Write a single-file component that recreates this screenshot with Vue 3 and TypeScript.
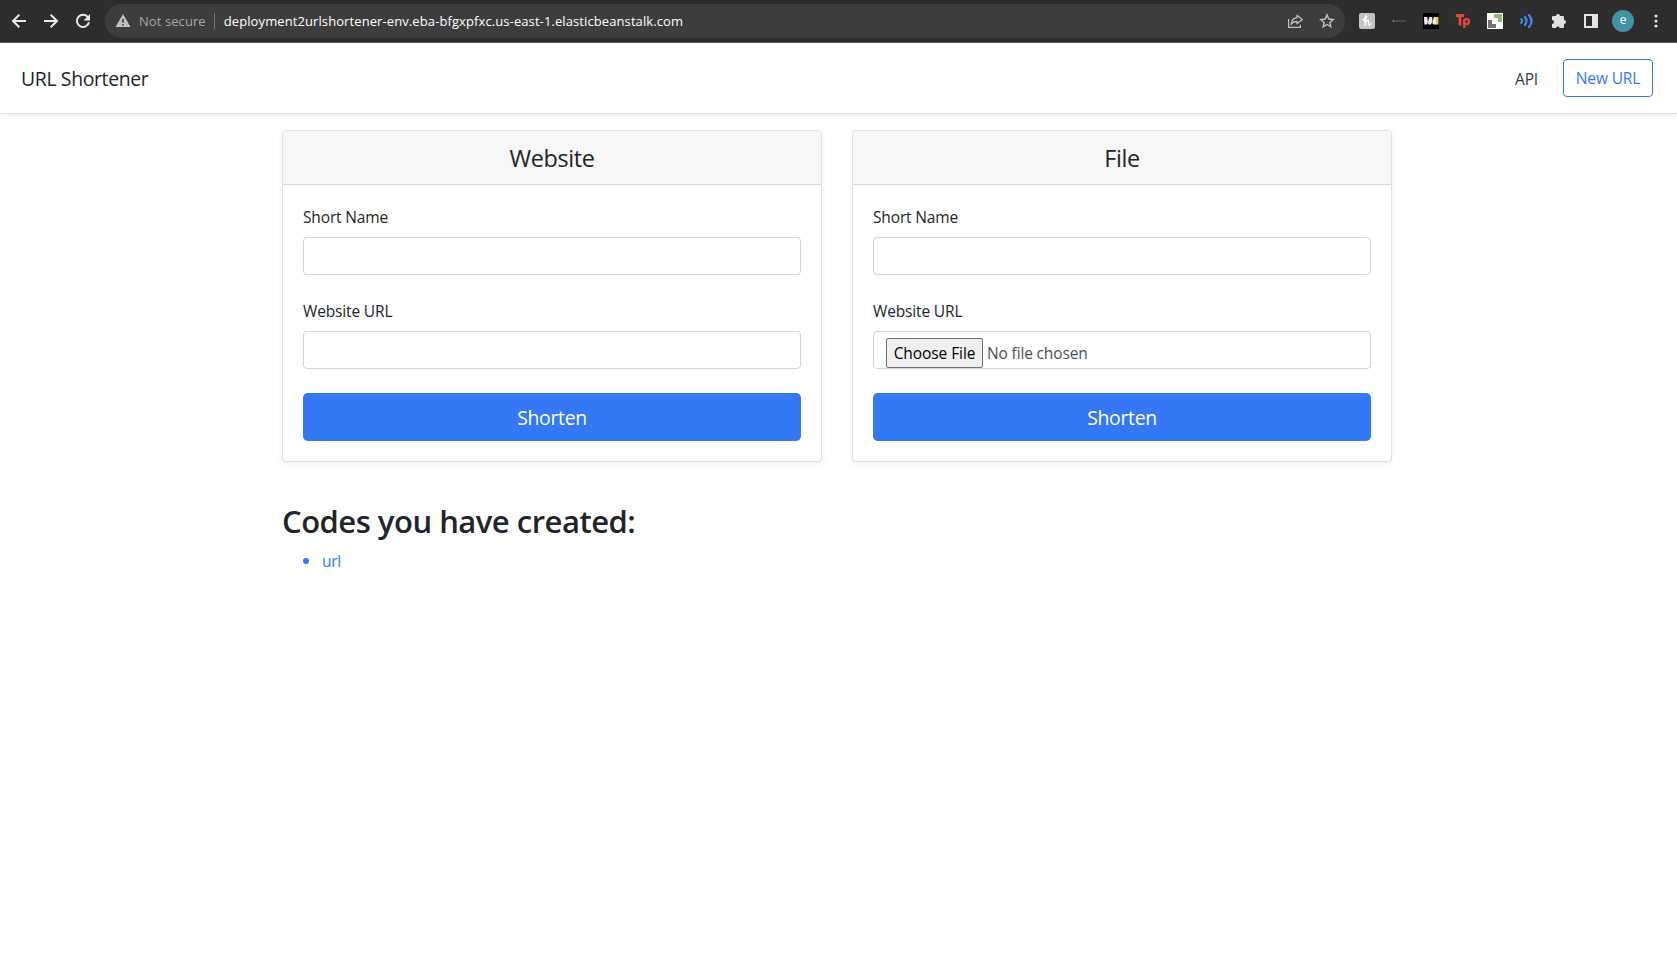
<script setup lang="ts">
import { ref } from 'vue'

interface ShortenForm {
  id: string
  title: string
  kind: 'url' | 'file'
}

const forms: ShortenForm[] = [
  { id: 'website', title: 'Website', kind: 'url' },
  { id: 'file', title: 'File', kind: 'file' },
]
const codes = ref<string[]>(['url'])
</script>

<template>
  <div class="window">
    <header class="toolbar">
      <nav class="history">
        <svg class="icon" viewBox="0 0 16 16" fill="none" stroke="#e8eaed" stroke-width="2">
          <path d="M15 8H2.4M8.3 1.7 2 8l6.3 6.3" />
        </svg>
        <svg class="icon" viewBox="0 0 16 16" fill="none" stroke="#e8eaed" stroke-width="2">
          <path d="M1 8h12.6M7.7 1.7 14 8l-6.3 6.3" />
        </svg>
        <svg class="icon" viewBox="0 0 16 16">
          <path d="M13 4.3A6.1 6.1 0 1 0 14 9.3" fill="none" stroke="#e8eaed" stroke-width="2" />
          <path d="M15 1v6.5H8.6z" fill="#e8eaed" />
        </svg>
      </nav>
      <div class="address">
        <svg class="icon" viewBox="0 0 16 16">
          <path d="M8 1 15.5 14H.5z" fill="#bdc1c6" />
          <path d="M7.2 6h1.6v3.8H7.2zM7.2 11h1.6v1.6H7.2z" fill="#3c3c3c" />
        </svg>
        <span class="secure">Not secure</span>
        <span class="divider"></span>
        <span class="location">deployment2urlshortener-env.eba-bfgxpfxc.us-east-1.elasticbeanstalk.com</span>
        <svg class="icon share" viewBox="0 0 16 16" fill="none" stroke="#bdc1c6" stroke-width="1.2">
          <path d="M1.6 6v8.4h11.8v-2.6" />
          <path d="M10 2.2 15.3 6.5 10 10.8V8.3C7.3 8.2 5.4 9.3 4 11.5 4.3 7.8 6.3 5.2 10 4.7z" stroke-linejoin="round" />
        </svg>
        <svg class="icon" viewBox="0 0 16 16" fill="none" stroke="#bdc1c6" stroke-width="1.4">
          <path d="m8 1.9 1.75 4.15 4.5.4-3.4 2.95 1 4.4L8 11.45 4.15 13.8l1-4.4-3.4-2.95 4.5-.4z" />
        </svg>
      </div>
      <div class="extensions">
        <svg class="icon" viewBox="0 0 16 16">
          <rect width="16" height="16" rx="2" fill="#c3c3c3" />
          <path d="M4 6.8C6.5 6 7.8 4.5 7.5 3.2 7.1 2.2 5.9 3.5 6 6.2L6.3 12.4M6.4 9.3C7.5 7.2 9.4 6.6 9.6 8.3c.2 1.5-.7 3.6.5 3.8.9.1 1.4-.7 1.7-1.4" fill="none" stroke="#fff" stroke-width="1.5" stroke-linecap="round" />
        </svg>
        <svg class="icon" viewBox="0 0 16 16">
          <circle cx="2.5" cy="8" r="1.2" fill="#777" />
          <path d="M4.5 8h10.300" stroke="#606060" stroke-width="1.3" stroke-dasharray="1.5 .4" />
        </svg>
        <svg class="icon" viewBox="0 0 16 16">
          <rect width="16" height="16" fill="#000" />
          <path d="M12 4h3.500v7.500h-3z" fill="#f5c842" />
          <path d="M1 4h3.200l.6 4L6.500 4h2.700l.5 4.200L11 4h1.700l.6 7.600h-3l-1.400-2-1 2H5.300l-.7-1.500-.8 1.500H1.300z" fill="#e9edf2" />
          <path d="M5.600 5 4.900 10.500M9.500 5v6" stroke="#555" stroke-width=".6" />
        </svg>
        <svg class="icon" viewBox="0 0 16 16" fill="none" stroke="#e0473d" stroke-width="2.9">
          <path d="M.8 2.500h8.400M5 2.500v10" />
          <circle cx="11.500" cy="8.700" r="2.500" stroke-width="2.300" />
          <path d="M9.300 8v7" stroke-width="2.300" />
        </svg>
        <svg class="icon" viewBox="0 0 16 16">
          <rect width="16" height="16" fill="#fff" />
          <path d="M7 1h8v8h-4V5H7z" fill="#91b978" />
          <path d="M1 7h4v4h4v4H1z" fill="#737373" />
        </svg>
        <svg class="icon" viewBox="0 0 16 16" fill="none" stroke="#3f8cf4" stroke-width="2.100" stroke-linecap="round">
          <path d="M2.300 6q1.500 2 0 4M6 4q3 4 0 8M10 2q5 6 0 12" />
        </svg>
        <svg class="icon" viewBox="0 0 16 16">
          <path d="M5 3a2 2 0 0 1 4 0h3a1 1 0 0 1 1 1v3a2 2 0 0 1 0 4v3a1 1 0 0 1-1 1H8.700a1.900 1.900 0 0 0-3.700 0H2a1 1 0 0 1-1-1v-3a2 2 0 0 0 0-4V4a1 1 0 0 1 1-1z" fill="#dfe0e2" />
        </svg>
        <svg class="icon" viewBox="0 0 16 16">
          <path d="M1 1h14v14H1zM3 3v10h6V3z" fill="#e4e4e4" fill-rule="evenodd" />
        </svg>
      </div>
      <span class="avatar">e</span>
      <svg class="menu" viewBox="0 0 4 16" fill="#e4e4e4">
        <circle cx="2" cy="3" r="1.600" /><circle cx="2" cy="8" r="1.600" /><circle cx="2" cy="13" r="1.600" />
      </svg>
    </header>

    <div class="navbar">
      <h5 class="brand">URL Shortener</h5>
      <a class="nav-link">API</a>
      <a class="new-url">New URL</a>
    </div>

    <main class="container">
      <div class="deck">
        <section v-for="form in forms" :key="form.id" class="card">
          <h4 class="card-title">{{ form.title }}</h4>
          <form class="card-body" @submit.prevent>
            <label class="label" :for="form.id + '-name'">Short Name</label>
            <input :id="form.id + '-name'" class="control" type="text" />
            <label class="label second">Website URL</label>
            <input v-if="form.kind === 'url'" class="control" type="text" />
            <div v-else class="control file">
              <button type="button" class="choose">Choose File</button>
              <span class="no-file">No file chosen</span>
            </div>
            <button class="submit" type="submit">Shorten</button>
          </form>
        </section>
      </div>

      <h2 class="codes-title">Codes you have created:</h2>
      <ul class="codes">
        <li v-for="code in codes" :key="code"><span class="code">{{ code }}</span></li>
      </ul>
    </main>
  </div>
</template>

<style>
body {
  margin: 0;
  background: #fff;
}
</style>

<style scoped>
* {
  box-sizing: border-box;
}
.window {
  height: 968px;
  overflow: hidden;
  background: #fff;
  color: #212529;
  font: 400 15.5px/24px "Open Sans", "Noto Sans", sans-serif;
  letter-spacing: -0.15px;
}
.toolbar {
  display: flex;
  align-items: center;
  height: 43px;
  padding: 0 19px 1px 11px;
  background: #2d2d2d;
  border-bottom: 1px solid #5a5a5a;
}
.icon {
  display: block;
  flex: none;
  width: 16px;
  height: 16px;
}
.history {
  display: flex;
  gap: 16px;
}
.address {
  display: flex;
  align-items: center;
  width: 1240px;
  height: 34px;
  margin: 0 14px;
  padding: 0 10px;
  border-radius: 17px;
  background: #3d3d3d;
  font-size: 13px;
  line-height: 18px;
  white-space: nowrap;
}
.secure {
  margin-left: 8px;
  color: #a5a8ac;
  letter-spacing: 0.08px;
}
.divider {
  width: 1px;
  height: 16px;
  margin: 0 9px 0 8px;
  background: #777;
}
.location {
  color: #fff;
  letter-spacing: 0.096px;
}
.share {
  margin: 0 16px 0 auto;
}
.extensions {
  display: flex;
  gap: 16px;
}
.avatar {
  width: 22px;
  height: 22px;
  margin-left: 13px;
  border-radius: 50%;
  background: #4292a4;
  color: #fff;
  font-size: 12px;
  line-height: 20px;
  text-align: center;
}
.menu {
  width: 4px;
  height: 16px;
  margin-left: auto;
}
.navbar {
  display: flex;
  align-items: center;
  height: 71px;
  padding: 0 24px 0 21px;
  border-bottom: 1px solid #dee2e6;
  box-shadow: 0 2px 6px rgba(0, 0, 0, 0.07);
}
.brand {
  margin: 0 auto 0 0;
  padding-top: 2px;
  font-size: 19.4px;
  font-weight: 400;
  letter-spacing: -0.35px;
}
.nav-link {
  margin-right: 25px;
  padding-top: 1px;
  color: #343a40;
}
.new-url {
  width: 90px;
  height: 38px;
  border: 1px solid #3478f6;
  border-radius: 4px;
  color: #3478f6;
  line-height: 37px;
  text-align: center;
}
.container {
  width: 1110px;
  margin: 16px 0 0 282px;
}
.deck {
  display: grid;
  grid-template-columns: 1fr 1fr;
  gap: 30px;
}
.card {
  height: 332px;
  border: 1px solid #dfdfdf;
  border-radius: 4px;
  background: #fff;
  box-shadow: 0 2px 6px rgba(0, 0, 0, 0.07);
}
.card-title {
  height: 54px;
  margin: 0;
  border-bottom: 1px solid #d8d8d8;
  border-radius: 3px 3px 0 0;
  background: #f7f7f7;
  font-size: 23.4px;
  font-weight: 400;
  line-height: 55px;
  letter-spacing: -0.35px;
  text-align: center;
}
.card-body {
  display: flex;
  flex-direction: column;
  padding: 20px;
}
.label {
  margin-bottom: 8px;
}
.label.second {
  margin-top: 24px;
}
.control {
  width: 100%;
  height: 38px;
  margin: 0;
  padding: 6px 12px;
  border: 1px solid #ced4da;
  border-radius: 4px;
  background: #fff;
}
.file {
  display: flex;
  align-items: flex-start;
  gap: 4px;
  overflow: hidden;
  color: #495057;
  line-height: 30px;
}
.choose {
  width: 97px;
  height: 30px;
  padding: 0;
  border: 1px solid #6f6f6f;
  border-radius: 2px;
  background: #efefef;
  color: #000;
  font: inherit;
  line-height: 28px;
  letter-spacing: -0.08px;
}
.submit {
  height: 48px;
  margin-top: 24px;
  padding: 2px 0 0;
  border: 0;
  border-radius: 4.8px;
  background: #3478f6;
  color: #fff;
  font: inherit;
  font-size: 19.4px;
  letter-spacing: -0.3px;
}
.codes-title {
  margin: 40px 0 8px;
  font-size: 31px;
  font-weight: 600;
  line-height: 38px;
  letter-spacing: -0.5px;
}
.codes {
  margin: 0;
  padding-left: 40px;
  color: #3478f6;
}
.codes li::marker {
  font-size: 17.5px;
}
.code {
  letter-spacing: -0.3px;
}
</style>
